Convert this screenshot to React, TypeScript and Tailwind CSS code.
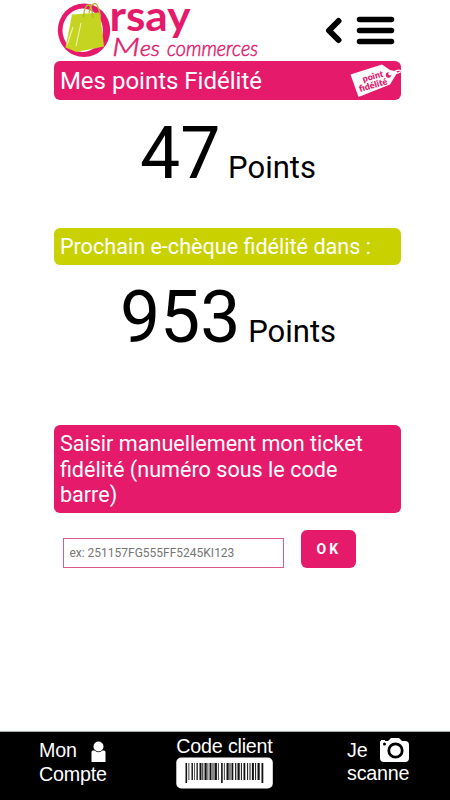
import type { ReactNode } from 'react';

interface BannerProps {
    className: string;
    children: ReactNode;
}

// [x, width, height] of every bar of the client code
const BARS: [number, number, number][] = [
    [0, 1.6, 20], [3, 0.8, 17], [6, 1.4, 17], [8.6, 0.7, 17], [11, 1.3, 17],
    [14, 2, 17], [16.8, 1, 17], [19, 2.2, 17], [22, 0.8, 17], [24, 2, 17],
    [27, 1, 17], [29, 2.4, 17], [32.4, 0.8, 17], [35.6, 1.6, 20], [38.4, 0.8, 17],
    [41, 2.2, 17], [44, 1, 17], [46, 1.8, 17], [49.6, 1.2, 17], [52, 2.2, 17],
    [55.4, 1, 17], [58, 1.8, 17], [61.6, 1, 17], [64, 1, 17], [66.4, 2, 17],
    [69.6, 1, 17], [72, 2.2, 17], [76, 1.8, 20],
];

function Logo() {
    return (
        <svg className="block" width="206" height="61" viewBox="55 0 206 61">
            <ellipse cx="84" cy="30.3" rx="26.2" ry="26.8" fill="#e51a6b" />
            <ellipse cx="82.7" cy="30.3" rx="20.2" ry="21.7" fill="#fff" />
            <path d="M72 14.500L100 12.500L104 46.500L76.500 52L65.500 47.500Z" fill="#c5d421" />
            <path d="M76 46L81 23M67 45L73 27" stroke="#eef3b5" strokeWidth="1.1" fill="none" />
            <path d="M83.500 18C84 9 86 5 88.500 5S92 9 93 18M89 13C90 7 92.500 3.500 95 3.500S99 8 100.500 17" stroke="#aebc30" strokeWidth="1.3" fill="none" />
            <text x="109.500" y="31" textLength="81" lengthAdjust="spacingAndGlyphs" fontFamily="Lato, sans-serif" fontWeight="700" fontSize="42" fill="#e51a6b">rsay</text>
            <g fontFamily="Lato, sans-serif" fontStyle="italic" fontWeight="300" fill="#e51a6b" stroke="#e51a6b" strokeWidth="0.5">
                <text x="112" y="56" fontSize="26" textLength="28" lengthAdjust="spacingAndGlyphs">M</text>
                <text x="140" y="56" fontSize="21" textLength="20" lengthAdjust="spacingAndGlyphs">es</text>
                <text x="167" y="56" fontSize="21" textLength="91" lengthAdjust="spacingAndGlyphs">commerces</text>
            </g>
        </svg>
    );
}

function Tag() {
    return (
        <svg className="block" width="52" height="37" viewBox="349 62 52 37">
            <path d="M350.500 74.500L382 64.500L390 70L397 71.500V73L390 84.500L358.500 97Z" fill="#fff" />
            <path d="M394 72C397 69.500 399 70 401 70.500M394 73C397 74 399 73 401 71.500" stroke="#fff" strokeWidth="1.2" fill="none" />
            <circle cx="388.500" cy="75" r="2.700" fill="#e51a6b" />
            <circle cx="390" cy="73.800" r="1.800" fill="#fff" />
            <g transform="rotate(-16 373 79)" fontFamily="Lato, sans-serif" fontWeight="800" fill="#e51a6b">
                <text x="363" y="79.500" fontSize="9" textLength="21" lengthAdjust="spacingAndGlyphs">point</text>
                <text x="357" y="88" fontSize="9" textLength="29" lengthAdjust="spacingAndGlyphs">fidélité</text>
            </g>
        </svg>
    );
}

function Banner({ className, children }: BannerProps) {
    return <div className={`flex w-full rounded-md pl-[5.5px] text-white ${className}`}>{children}</div>;
}

function Points({ value }: { value: number }) {
    return (
        <p className="pl-px text-center text-[31px] leading-[84px]">
            <span className="text-[71.5px]">{value}</span> Points
        </p>
    );
}

export default function App() {
    return (
        <div className="flex h-[800px] w-[450px] flex-col overflow-hidden bg-white font-['Roboto',sans-serif] text-black">
            <header className="flex h-[61px] pl-[55px]">
                <Logo />
                <div className="ml-[64px] flex items-start gap-[13px] pt-4">
                    <button aria-label="Retour">
                        <svg className="block" width="18" height="29" viewBox="325 16 18 29">
                            <path d="M338.500 21L329 30.500L338.500 40" fill="none" stroke="#000" strokeWidth="6" strokeLinecap="round" strokeLinejoin="round" />
                        </svg>
                    </button>
                    <button aria-label="Menu">
                        <svg className="block" width="40" height="29" viewBox="356 16 40 29">
                            <path d="M359.500 19.500H391.500M359.500 30.500H391.500M359.500 41.500H391.500" stroke="#000" strokeWidth="5.500" strokeLinecap="round" />
                        </svg>
                    </button>
                </div>
            </header>

            <main className="ml-[54.4px] flex w-[346.2px] flex-1 flex-col self-start">
                {/* Current balance */}
                <Banner className="h-[39px] items-center justify-between bg-[#e51a6b] text-2xl">
                    <h1>Mes points Fidélité</h1>
                    <Tag />
                </Banner>
                <div className="h-32 pt-[12px]">
                    <Points value={47} />
                </div>

                {/* Points left before the next voucher */}
                <Banner className="h-[37px] items-center bg-[#c9d200] pt-0.5 text-[21.6px]">
                    <h2>Prochain e-chèque fidélité dans :</h2>
                </Banner>
                <div className="h-40 pt-[11px]">
                    <Points value={953} />
                </div>

                {/* Manual ticket entry */}
                <Banner className="h-[88px] bg-[#e51a6b] pt-[6px] pr-4 text-[21.6px] leading-[25.5px]">
                    <label htmlFor="ticket">Saisir manuellement mon ticket fidélité (numéro sous le code barre)</label>
                </Banner>
                <form className="mt-[17px] ml-[9px] flex items-end">
                    <input
                        id="ticket"
                        className="h-[30px] w-[221px] border border-[#d85b8b] pl-[5px] text-xs placeholder:text-[#757575]"
                        placeholder="ex: 251157FG555FF5245KI123"
                    />
                    <button type="button" className="ml-[17px] h-[38px] w-[55px] rounded-md bg-[#e51a6b] text-sm font-bold tracking-[3px] text-white">
                        OK
                    </button>
                </form>
            </main>

            <footer className="flex h-[69px] border-t border-[#a8adae] bg-black font-['Liberation_Sans',sans-serif] text-[19.7px] leading-6 tracking-[-0.2px] text-white">
                <a className="ml-[39px] w-[137px] pt-1.5">
                    <span className="flex items-start gap-[14px]">
                        Mon
                        <svg className="mt-[3px]" width="15" height="22" viewBox="0 0 15 22">
                            <path d="M0.500 11Q0.500 9.500 2 9.500H3.500Q7.500 13 11.500 9.500H13Q14.500 9.500 14.500 11V21H0.500Z" fill="#fff" />
                            <circle cx="7.500" cy="5.500" r="5" fill="#fff" />
                        </svg>
                    </span>
                    <span className="-mt-px block">Compte</span>
                </a>
                <a className="flex w-[97px] flex-col items-center pt-[2px]">
                    <span className="whitespace-nowrap">Code client</span>
                    <svg className="-mt-px block shrink-0" width="97" height="32" viewBox="0 0 97 32">
                        <rect width="96.500" height="31" x="0.300" y="0.500" rx="5" fill="#fff" />
                        {BARS.map(([x, width, height]) => (
                            <rect key={x} x={x + 9.500} y="6" width={width} height={height} fill="#111" />
                        ))}
                    </svg>
                </a>
                <a className="ml-[74px] pt-1.5">
                    <span className="flex items-start gap-3">
                        Je
                        <svg className="-mt-px" width="30" height="26" viewBox="0 0 30 26">
                            <path d="M1 5Q1 4 2 4V3H6V4H9L12 1H20L23 4H26Q30 4 30 8V21Q30 25 26 25H5Q1 25 1 21Z" fill="#fff" />
                            <circle cx="16.500" cy="13.500" r="6.700" fill="#fff" stroke="#000" strokeWidth="2.800" />
                            <circle cx="5.500" cy="7" r="1.500" fill="#000" />
                        </svg>
                    </span>
                    <span className="-mt-[2px] block">scanne</span>
                </a>
            </footer>
        </div>
    );
}
